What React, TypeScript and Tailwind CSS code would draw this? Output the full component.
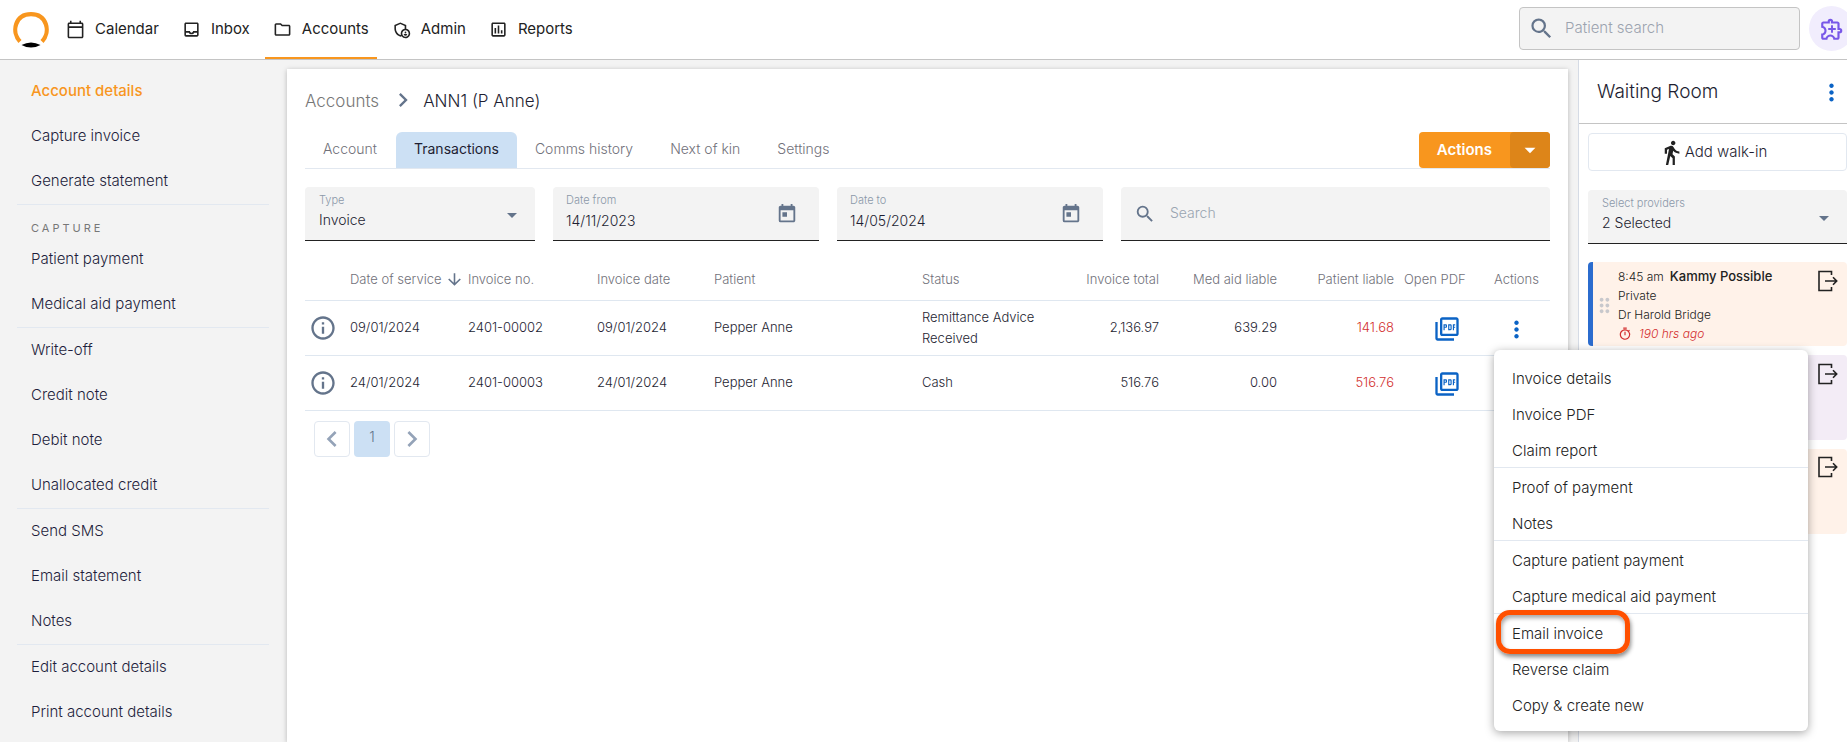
import {
    MdArrowDownward,
    MdArrowDropDown,
    MdChevronLeft,
    MdChevronRight,
    MdDirectionsWalk,
    MdDragIndicator,
    MdMoreVert,
    MdOutlineAdminPanelSettings,
    MdOutlineAssessment,
    MdOutlineCalendarToday,
    MdOutlineExtension,
    MdOutlineFolder,
    MdOutlineInbox,
    MdOutlineInfo,
    MdOutlinePictureAsPdf,
    MdOutlineTimer,
    MdSearch,
    MdToday,
} from "react-icons/md";

const navItems = [
    { label: "Calendar", icon: MdOutlineCalendarToday },
    { label: "Inbox", icon: MdOutlineInbox },
    { label: "Accounts", icon: MdOutlineFolder, active: true },
    { label: "Admin", icon: MdOutlineAdminPanelSettings },
    { label: "Reports", icon: MdOutlineAssessment },
];

const sideGroups = [
    { title: "", items: ["Account details", "Capture invoice", "Generate statement"] },
    { title: "CAPTURE", items: ["Patient payment", "Medical aid payment"] },
    { title: "", items: ["Write-off", "Credit note", "Debit note", "Unallocated credit"] },
    { title: "", items: ["Send SMS", "Email statement", "Notes"] },
    { title: "", items: ["Edit account details", "Print account details"] },
];

const tabs = ["Account", "Transactions", "Comms history", "Next of kin", "Settings"];

const invoices = [
    {
        service: "09/01/2024",
        no: "2401-00002",
        date: "09/01/2024",
        patient: "Pepper Anne",
        status: "Remittance Advice Received",
        total: "2,136.97",
        medAid: "639.29",
        liable: "141.68",
    },
    {
        service: "24/01/2024",
        no: "2401-00003",
        date: "24/01/2024",
        patient: "Pepper Anne",
        status: "Cash",
        total: "516.76",
        medAid: "0.00",
        liable: "516.76",
    },
];

const menuGroups = [
    ["Invoice details", "Invoice PDF", "Claim report"],
    ["Proof of payment", "Notes"],
    ["Capture patient payment", "Capture medical aid payment"],
    ["Email invoice", "Reverse claim", "Copy & create new"],
];

const Logo = () => (
    <svg viewBox="0 0 36 36" className="size-9" aria-hidden="true">
        <path d="M7 29.500C-2 20 2 2.200 18 2.200S38 20 29 29.500" fill="none" stroke="#f8961e" strokeWidth="4.200" />
        <path d="M8.500 33Q18 28 27.500 33Q18 38 8.500 33Z" fill="#000" />
    </svg>
);

const CheckOutIcon = () => (
    <svg viewBox="0 0 20 22" className="h-[22px] w-5" fill="none" stroke="#222" strokeWidth="1.600" aria-hidden="true">
        <path d="M13.500 5V1.500H1V20.500H13.500V17" />
        <path d="M7 11H18.500M15 7.300L18.700 11L15 14.700" />
    </svg>
);

const Header = () => (
    <header className="flex h-[60px] items-center justify-between overflow-hidden border-b border-[#c4c4c4] bg-white pl-[13px]">
        <div className="flex h-full items-center">
            <a href="#home" aria-label="Home">
                <Logo />
            </a>
            <nav className="ml-[9px] flex h-full gap-[7px]">
                {navItems.map(({ label, icon: Icon, active }) => (
                    <a
                        key={label}
                        href={`#${label.toLowerCase()}`}
                        className={`flex items-center gap-2.5 border-b-2 px-2 pt-0.5 text-[15px] text-[#222] ${active ? "border-[#f8961e]" : "border-transparent"}`}
                    >
                        <Icon className="size-[19px]" />
                        {label}
                    </a>
                ))}
            </nav>
        </div>
        <div className="flex shrink-0 items-center gap-[9px] pb-0.5">
            <label className="flex h-[43px] w-[281px] items-center gap-2.5 rounded border border-[#c4c4c4] bg-[#f3f3f3] pl-2">
                <MdSearch className="size-[27px] shrink-0 text-[#64748b]" />
                <input type="search" aria-label="Patient search" placeholder="Patient search" className="w-full bg-transparent text-[15px] font-light outline-none placeholder:text-[#9ca3af]" />
            </label>
            <button aria-label="Extensions" className="-mr-[7px] flex size-[45px] items-center justify-center rounded-full bg-[#f1edfd] text-[#7857e8]">
                <span className="relative">
                    <MdOutlineExtension className="size-[26px]" />
                    <svg viewBox="0 0 24 24" className="absolute inset-0 size-[26px]" fill="none" stroke="currentColor" strokeWidth="1.800" aria-hidden="true">
                        <path d="M12 8.500V15.500M8.500 12H15.500" />
                    </svg>
                </span>
            </button>
        </div>
    </header>
);

const Sidebar = () => (
    <aside className="w-[287px] shrink-0 pt-[9px] pr-[18px] pl-[17px]">
        {sideGroups.map((group, index) => (
            <div key={index} className={index ? "border-t border-[#e2e8f0]" : ""}>
                {group.title && (
                    <h3 className="h-8 pt-[15px] pl-3.5 text-[11px] leading-4 tracking-[3px] text-[#777]">{group.title}</h3>
                )}
                {group.items.map((item) => (
                    <a
                        key={item}
                        href="#side"
                        className={`flex h-[45px] items-center pl-3.5 text-[15px] ${item === "Account details" ? "font-medium text-[#f8961e]" : "font-light text-[#1e1e3c]"}`}
                    >
                        {item}
                    </a>
                ))}
            </div>
        ))}
    </aside>
);

const DateField = ({ label, value }: { label: string; value: string }) => (
    <label className="flex h-[54px] w-[266px] items-center justify-between rounded-t border-b border-[#222] bg-[#f3f3f3] pr-[21px] pl-[13px]">
        <span className="flex flex-col pb-[3px]">
            <span className="text-[11px] leading-4 font-light text-[#8b98a9]">{label}</span>
            <input defaultValue={value} className="h-6 w-36 bg-transparent text-sm font-light outline-none" />
        </span>
        <MdToday className="size-[22px] text-[#64748b]" />
    </label>
);

const ActionsMenu = () => (
    <div role="menu" className="absolute top-[49px] left-0 z-20 w-[314px] rounded-md bg-white py-[9px] shadow-[0_2px_10px_rgba(0,0,0,0.35)]">
        {menuGroups.map((group, index) => (
            <div key={index} className={index ? "border-t border-[#e2e8f0]" : ""}>
                {group.map((item) => (
                    <button key={item} role="menuitem" className="relative flex h-9 w-full items-center pt-1.5 pl-[18px] text-[15px] font-light text-[#222]">
                        {item}
                        {item === "Email invoice" && (
                            <span className="absolute -top-1 left-0.5 h-11 w-[134px] rounded-[14px] border-5 border-[#ff5000] shadow-[1px_3px_4px_rgba(0,0,0,0.45),inset_1px_3px_4px_rgba(0,0,0,0.35)]" />
                        )}
                    </button>
                ))}
            </div>
        ))}
    </div>
);

const InvoiceTable = () => (
    <table className="mt-1 w-full table-fixed text-left text-[13px] font-light">
        <colgroup>
            <col className="w-[45px]" />
            <col className="w-[118px]" />
            <col className="w-[129px]" />
            <col className="w-[117px]" />
            <col />
            <col className="w-[120px]" />
            <col className="w-[117px]" />
            <col className="w-[118px]" />
            <col className="w-[117px]" />
            <col className="w-[100px]" />
            <col className="w-14" />
        </colgroup>
        <thead>
            <tr className="h-[55px] border-b border-[#dfe7f0] text-[#71717a] [&>th]:pt-3.5 [&>th]:font-light">
                <th />
                <th>
                    <span className="flex items-center gap-1 whitespace-nowrap">
                        Date of service
                        <MdArrowDownward className="size-[19px] shrink-0 text-[#64748b]" />
                    </span>
                </th>
                <th>Invoice no.</th>
                <th>Invoice date</th>
                <th>Patient</th>
                <th>Status</th>
                <th className="text-right">Invoice total</th>
                <th className="text-right">Med aid liable</th>
                <th className="text-right">Patient liable</th>
                <th className="pl-2.5">Open PDF</th>
                <th>Actions</th>
            </tr>
        </thead>
        <tbody>
            {invoices.map((row, index) => (
                <tr key={row.no} className="h-[55px] border-b border-[#dfe7f0] text-[#1e1e32]">
                    <td>
                        <button aria-label="Invoice info" className="ml-1 block text-[#64748b]">
                            <MdOutlineInfo className="size-7" />
                        </button>
                    </td>
                    <td>{row.service}</td>
                    <td>{row.no}</td>
                    <td>{row.date}</td>
                    <td>{row.patient}</td>
                    <td className="leading-[21px]">{row.status}</td>
                    <td className="text-right">{row.total}</td>
                    <td className="text-right">{row.medAid}</td>
                    <td className="text-right text-[#d32f2f]">{row.liable}</td>
                    <td className="pt-0.5">
                        <button aria-label="Open PDF" className="ml-[39px] block text-[#0b63c5]">
                            <MdOutlinePictureAsPdf className="size-7" />
                        </button>
                    </td>
                    <td className="relative pt-1">
                        <button aria-label="Row actions" className="ml-[9px] block text-[#0b63c5]">
                            <MdMoreVert className="size-[27px]" />
                        </button>
                        {index === 0 && <ActionsMenu />}
                    </td>
                </tr>
            ))}
        </tbody>
    </table>
);

const Main = () => (
    <main className="mt-[9px] min-w-0 flex-1 bg-white px-[18px] shadow-[0_1px_5px_rgba(0,0,0,0.25)]">
        <div className="flex h-[63px] items-center pt-0.5 text-[17px] font-light">
            <a href="#accounts" className="text-[#777]">Accounts</a>
            <MdChevronRight className="mr-1.5 mb-1 ml-2.5 size-7 text-[#64748b]" />
            <h1 className="text-[#1e1e32]">ANN1 (P Anne)</h1>
        </div>

        <div className="flex items-end justify-between border-b border-[#e2e8f0]">
            <div role="tablist" className="flex">
                {tabs.map((tab) => (
                    <button
                        key={tab}
                        role="tab"
                        aria-selected={tab === "Transactions"}
                        className={`h-9 rounded-t-md pb-0.5 text-sm ${tab === "Transactions" ? "bg-[#cce0f4] px-[18px] text-[#1e1e32]" : "pr-[19px] pl-[18px] font-light text-[#71717a]"}`}
                    >
                        {tab}
                    </button>
                ))}
            </div>
            <div className="flex h-9 rounded bg-[#f8961e] text-white">
                <button className="px-[18px] text-[15px] font-semibold">Actions</button>
                <button aria-label="More actions" className="flex w-10 items-center justify-center rounded bg-[#dd8519]">
                    <MdArrowDropDown className="size-[26px]" />
                </button>
            </div>
        </div>

        <div className="mt-[18px] flex gap-[18px] text-[#1e1e32]">
            <label className="relative flex h-[54px] w-[230px] flex-col rounded-t border-b border-[#222] bg-[#f3f3f3] pt-[5px] pl-3.5">
                <span className="text-[11px] leading-4 font-light text-[#8b98a9]">Type</span>
                <select className="h-6 w-full appearance-none bg-transparent text-sm font-light outline-none">
                    <option>Invoice</option>
                </select>
                <MdArrowDropDown className="pointer-events-none absolute top-4 right-[11px] size-6 text-[#64748b]" />
            </label>
            <DateField label="Date from" value="14/11/2023" />
            <DateField label="Date to" value="14/05/2024" />
            <label className="flex h-[54px] min-w-0 flex-1 items-center gap-3.5 rounded-t border-b border-[#222] bg-[#f3f3f3] pl-[13px]">
                <MdSearch className="size-[22px] shrink-0 text-[#64748b]" />
                <input type="search" aria-label="Search" placeholder="Search" className="w-full bg-transparent pb-0.5 text-sm font-light outline-none placeholder:text-[#9aa5b1]" />
            </label>
        </div>

        <InvoiceTable />

        <div className="mt-2.5 ml-[9px] flex gap-1 text-[#94a3b8]">
            <button aria-label="Previous page" className="flex size-9 items-center justify-center rounded border border-[#e2e8f0]">
                <MdChevronLeft className="size-8" />
            </button>
            <button className="size-9 rounded bg-[#cce0f4] pb-1 text-sm font-light text-[#64748b]">1</button>
            <button aria-label="Next page" className="flex size-9 items-center justify-center rounded border border-[#e2e8f0]">
                <MdChevronRight className="size-8" />
            </button>
        </div>
    </main>
);

const WaitingRoom = () => (
    <aside className="ml-2.5 w-[269px] shrink-0 border-l border-[#d5dbe5] bg-white">
        <div className="flex h-16 items-center justify-between border-b border-[#c4c4c4] pt-0.5 pr-0.5 pl-[18px]">
            <h2 className="text-[19px] font-light text-[#1e1e32]">Waiting Room</h2>
            <button aria-label="Waiting room options" className="text-[#0b63c5]">
                <MdMoreVert className="size-[27px]" />
            </button>
        </div>
        <div className="pt-[9px] pl-[9px]">
            <button className="flex h-[38px] w-full items-center justify-center rounded border border-[#e2e8f0] pr-2.5 text-[15px] font-light text-[#1e1e32]">
                <MdDirectionsWalk className="size-[27px] text-[#222]" />
                Add walk-in
            </button>
            <label className="relative mt-[19px] flex h-[54px] flex-col rounded-t border-b border-[#222] bg-[#f3f3f3] pt-[5px] pl-3.5 text-[#1e1e32]">
                <span className="text-[11px] leading-4 font-light text-[#8b98a9]">Select providers</span>
                <select className="h-6 w-full appearance-none bg-transparent text-sm font-light outline-none">
                    <option>2 Selected</option>
                </select>
                <MdArrowDropDown className="pointer-events-none absolute top-4 right-[11px] size-6 text-[#64748b]" />
            </label>

            <div className="mt-[18px] flex flex-col gap-[9px]">
                <div className="flex h-[84px] rounded border-l-5 border-[#2b6cce] bg-[#fff2e9] pt-[5px] pr-[9px]">
                    <MdDragIndicator className="mt-[27px] mr-0.5 size-[23px] shrink-0 text-[#c8c8cc]" />
                    <div className="flex-1 text-xs leading-[19px] font-light text-[#222]">
                        <p className="flex gap-1.5">
                            8:45 am
                            <b className="text-[13px] font-medium">Kammy Possible</b>
                        </p>
                        <p>Private</p>
                        <p>Dr Harold Bridge</p>
                        <p className="flex items-center gap-[7px] text-[#d32f2f] italic">
                            <MdOutlineTimer className="size-3.5" />
                            190 hrs ago
                        </p>
                    </div>
                    <button aria-label="Check out" className="mt-[3px] self-start">
                        <CheckOutIcon />
                    </button>
                </div>
                <div className="flex h-[85px] justify-end rounded bg-[#f3ecf6] pt-2 pr-[9px]">
                    <button aria-label="Check out" className="self-start">
                        <CheckOutIcon />
                    </button>
                </div>
                <div className="flex h-[85px] justify-end rounded bg-[#fff2e9] pt-[7px] pr-[9px]">
                    <button aria-label="Check out" className="self-start">
                        <CheckOutIcon />
                    </button>
                </div>
            </div>
        </div>
    </aside>
);

export default function App() {
    return (
        <div className="flex min-h-screen flex-col bg-[#f3f3f3] font-['Inter',sans-serif]">
            <Header />
            <div className="flex flex-1">
                <Sidebar />
                <Main />
                <WaitingRoom />
            </div>
        </div>
    );
}
